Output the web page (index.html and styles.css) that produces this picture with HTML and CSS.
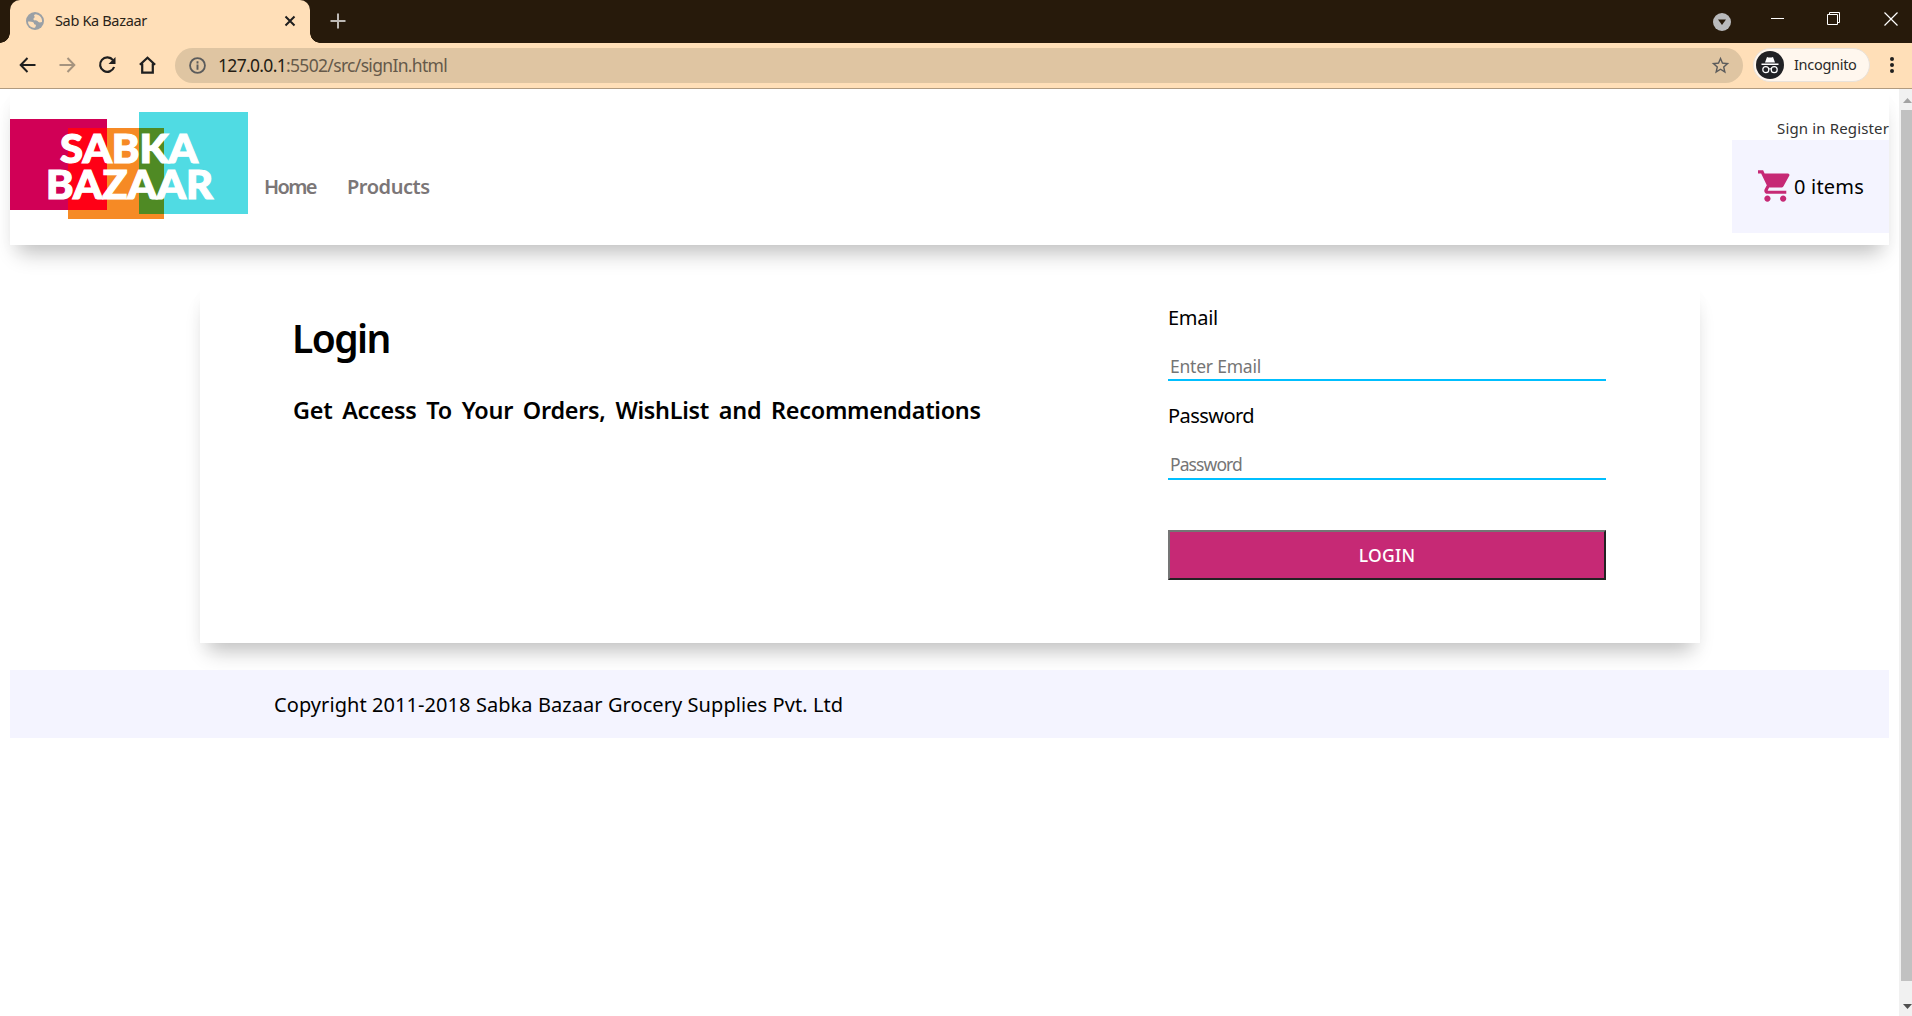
FILE: index.html
```html
<!DOCTYPE html>
<html lang="en">
<head>
<meta charset="utf-8">
<title>Sab Ka Bazaar</title>
<link rel="stylesheet" href="styles.css">
</head>
<body>
<div class="tabstrip">
  <div class="tab">
    <svg class="globe" viewBox="0 0 18 18"><circle cx="9" cy="9" r="9" fill="#9aa0a6"/><path d="M2 9.500c2 0 4.500 0 5.500 1s0 2 1.500 2 1 1.500 0 3.300C5 16 2 13 2 9.500zM10 2.200c-2 .3-2.500 1.300-1.500 2.300S7 6 7.500 7.500s3 .5 4 1.500 1.500 2 4.500 1C16.500 6 14 3 10 2.200z" fill="#ffdfb8"/></svg>
    <span class="tab-title">Sab Ka Bazaar</span>
    <svg class="tab-close" viewBox="0 0 12 12"><path d="M1.500 1.500l9 9m0-9l-9 9" stroke="#1f1f1f" stroke-width="2"/></svg>
  </div>
  <svg class="new-tab" viewBox="0 0 16 16"><path d="M8 .5v15M.5 8h15" stroke="#bdb9b5" stroke-width="2"/></svg>
  <div class="window-controls">
    <svg class="wc-search" viewBox="0 0 18 18"><circle cx="9" cy="9" r="9" fill="#b9babc"/><path d="M5 6.500h8L9 12z" fill="#271a0b"/></svg>
    <svg class="wc-min" viewBox="0 0 13 14"><path d="M0 7.500h13" stroke="#fff"/></svg>
    <svg class="wc-max" viewBox="0 0 14 14"><path d="M.5 2.500h10v10H.5zM2.500 2.500v-2h10v10h-2" fill="none" stroke="#fff"/></svg>
    <svg class="wc-close" viewBox="0 0 14 14"><path d="M.5.5l13 13m0-13l-13 13" stroke="#fff" stroke-width="1.200"/></svg>
  </div>
</div>
<div class="toolbar">
  <svg class="back" viewBox="0 0 16 16"><path d="M16 8H1.500M8 1L1.200 8 8 15" fill="none" stroke="#1f1f1f" stroke-width="2"/></svg>
  <svg class="forward" viewBox="0 0 16 16"><path d="M0 8h14.500M8 1l6.800 7L8 15" fill="none" stroke="#a5937e" stroke-width="2"/></svg>
  <svg class="reload" viewBox="0 0 18 18"><path d="M15 4.200A7.200 7.200 0 1 0 16.100 11" fill="none" stroke="#1f1f1f" stroke-width="2.200"/><path d="M17.500 1v7h-7z" fill="#1f1f1f"/></svg>
  <svg class="home" viewBox="0 0 16 17"><path d="M.8 8.300L8 1.700l7.200 6.600M3 7v8.800h10V7" fill="none" stroke="#1f1f1f" stroke-width="2.100"/></svg>
  <div class="omnibox">
    <svg class="info" viewBox="0 0 16 16"><circle cx="8" cy="8" r="7" fill="none" stroke="#5b5b5b" stroke-width="1.700"/><path d="M8 7v5M8 4v2" stroke="#5b5b5b" stroke-width="1.800"/></svg>
    <span class="url"><span class="host">127.0.0.1</span>:5502/src/signIn.html</span>
    <svg class="star" viewBox="0 0 24 24"><path d="M22 9.240l-7.190-.620L12 2 9.190 8.630 2 9.240l5.460 4.730L5.820 21 12 17.270 18.180 21l-1.630-7.030zM12 15.400l-3.760 2.270 1-4.280-3.320-2.880 4.380-.380L12 6.100l1.710 4.040 4.380.380-3.320 2.880 1 4.280z" fill="#5b5b5b"/></svg>
  </div>
  <div class="incognito">
    <svg class="spy" viewBox="0 0 28 28"><circle cx="14" cy="14" r="14" fill="#202124"/><path d="M9 11.500L11 6q3 1 6 0l2 5.500zM5.500 12.500h17v1.400h-17z" fill="#fff"/><circle cx="9.800" cy="18.700" r="3" fill="none" stroke="#fff" stroke-width="1.200"/><circle cx="18.200" cy="18.700" r="3" fill="none" stroke="#fff" stroke-width="1.200"/><path d="M12.500 18.200q1.500-1 3 0" fill="none" stroke="#fff"/></svg>
    <span class="incog-label">Incognito</span>
  </div>
  <svg class="menu" viewBox="0 0 4 16"><circle cx="2" cy="2" r="2"/><circle cx="2" cy="8" r="2"/><circle cx="2" cy="14" r="2"/></svg>
</div>
<div class="viewport">
  <div class="page">
    <header class="header">
      <svg class="logo" viewBox="0 0 238 107">
        <path d="M0 7h97v91H0z" fill="#d10056"/><path d="M58 16h96v91H58z" fill="#f68a25"/><path d="M129 0h109v102H129z" fill="#50dbe3"/>
        <path d="M58 16h39v82H58z" fill="#ff0016"/><path d="M129 16h25v86h-25z" fill="#4f8a24"/>
        <text x="50" y="51" textLength="138" lengthAdjust="spacingAndGlyphs">SABKA</text><text x="36" y="87" textLength="167" lengthAdjust="spacingAndGlyphs">BAZAAR</text>
      </svg>
      <nav class="nav"><a class="nav-home">Home</a><a class="nav-products">Products</a></nav>
      <div class="account">
        <div class="auth">Sign in Register</div>
        <div class="cart">
          <svg class="cart-icon" viewBox="1 2 21 20"><path d="M7 18c-1.100 0-1.990.9-1.990 2S5.900 22 7 22s2-.9 2-2-.9-2-2-2zM1 2v2h2l3.600 7.590-1.350 2.450c-.160.280-.250.610-.250.960 0 1.100.9 2 2 2h12v-2H7.420c-.140 0-.250-.110-.250-.250l.030-.120.900-1.630h7.450c.750 0 1.410-.410 1.750-1.030l3.580-6.490A1 1 0 0 0 20 4H5.210l-.940-2H1zm16 16c-1.100 0-1.990.9-1.990 2s.890 2 1.990 2 2-.9 2-2-.9-2-2-2z" fill="#c62975"/></svg>
          <span class="count">0 items</span>
        </div>
      </div>
    </header>
    <main class="card">
      <section class="intro">
        <h1>Login</h1>
        <h3>Get Access To Your Orders, WishList and Recommendations</h3>
      </section>
      <form class="form">
        <label class="label-email" for="email">Email</label>
        <input class="field" id="email" type="email" placeholder="Enter Email">
        <label class="label-password" for="password">Password</label>
        <input class="field field-password" id="password" type="password" placeholder="Password">
        <button type="button" class="submit">LOGIN</button>
      </form>
    </main>
    <footer class="footer">Copyright 2011-2018 Sabka Bazaar Grocery Supplies Pvt. Ltd</footer>
  </div>
  <div class="scrollbar"><svg class="arrow" viewBox="0 0 9 5"><path d="M0 5l4.500-5L9 5z" fill="#a3a3a3"/></svg><div class="thumb"></div><svg class="arrow" viewBox="0 0 9 5"><path d="M0 0h9L4.500 5z" fill="#505050"/></svg></div>
</div>
</body>
</html>
```
FILE: styles.css
```css
* { box-sizing: border-box; }
body { margin: 0; height: 1016px; overflow: hidden; display: flex; flex-direction: column; background: #fff; color: #000; font-family: "Noto Sans", sans-serif; font-size: 20px; line-height: 28px; }
svg { display: block; flex: none; }
span, a, .auth, h3 { white-space: nowrap; }
.tabstrip { height: 43px; flex: none; display: flex; background: #271a0b; padding-left: 10px; }
.tab { position: relative; width: 300px; height: 43px; display: flex; align-items: center; background: #ffdfb8; border-radius: 10px 10px 0 0; padding: 0 14px 2px 16px; }
.tab::before, .tab::after { content: ""; position: absolute; bottom: 0; width: 10px; height: 10px; }
.tab::before { left: -10px; background: radial-gradient(circle at 0 0, transparent 9.500px, #ffdfb8 10px); }
.tab::after { right: -10px; background: radial-gradient(circle at 100% 0, transparent 9.500px, #ffdfb8 10px); }
.globe { width: 18px; height: 18px; }
.tab-title { margin: -2px 0 0 11px; font-size: 14.500px; letter-spacing: -.340px; color: #2b2418; }
.tab-close { width: 12px; height: 12px; margin-left: auto; }
.new-tab { width: 16px; height: 16px; margin: 13px 0 0 20px; }
.window-controls { display: flex; margin-left: auto; padding-right: 14px; }
.wc-search { width: 18px; height: 18px; margin: 13px 40px 0 0; }
.wc-min { width: 13px; height: 14px; margin: 11px 43px 0 0; }
.wc-max { width: 14px; height: 14px; margin: 12px 43px 0 0; }
.wc-close { width: 14px; height: 14px; margin-top: 12px; }
.toolbar { height: 46px; flex: none; display: flex; align-items: center; background: #ffdfb8; border-bottom: 1px solid #b19b80; padding: 0 18px 1px 19px; }
.back, .forward { width: 17px; height: 16px; }
.forward { margin-left: 23px; }
.reload { width: 18px; height: 18px; margin-left: 22px; }
.home { width: 17px; height: 18px; margin-left: 23px; }
.omnibox { flex: 1; height: 35px; margin-left: 19px; display: flex; align-items: center; border-radius: 18px; background: #dfc5a2; padding: 0 12px 0 14px; }
.info { width: 17px; height: 17px; }
.url { margin-left: 12px; font-size: 17.500px; letter-spacing: -.680px; color: #65594a; }
.host { color: #241d14; }
.star { width: 21px; height: 21px; margin-left: auto; }
.incognito { width: 117px; height: 34px; margin: 0 20px 0 10px; display: flex; align-items: center; background: #fff7ee; border: 1px solid #e9e2da; border-radius: 17px; padding-left: 2px; }
.spy { width: 28px; height: 28px; }
.incog-label { margin: -2px 0 0 10px; font-size: 14.500px; letter-spacing: -.300px; color: #2b2a29; }
.menu { width: 4px; height: 16px; fill: #1f1f1f; }
.viewport { flex: 1; display: flex; min-height: 0; }
.page { flex: 1; padding: 0 10px; }
.header { height: 156px; display: flex; background: #fff; }
.header, .card { box-shadow: 0 16px 20px -8px rgba(0,0,0,.240), 0 8px 16px rgba(0,0,0,.020); }
.logo { width: 238px; height: 107px; margin-top: 23px; fill: #fff; stroke: #fff; stroke-width: 1.200px; font: 900 39px Lato, sans-serif; }
.logo path { stroke: none; }
.nav { display: flex; margin: 84px 0 0 16px; color: #7b7677; font-weight: 600; }
.nav-home { width: 83px; letter-spacing: -1.600px; }
.nav-products { letter-spacing: -.450px; }
.account { width: 157px; margin: 27px 0 0 auto; }
.auth { font-size: 15px; line-height: 24px; letter-spacing: .140px; color: #333; text-align: right; }
.cart { height: 93px; display: flex; align-items: center; background: #f4f4ff; padding-left: 26px; }
.cart-icon { width: 33px; height: 32px; margin-top: -1px; }
.count { margin-left: 3px; letter-spacing: .200px; }
.card { width: 1500px; height: 358px; margin: 40px 0 0 190px; display: flex; justify-content: space-between; background: #fff; padding: 0 94px 0 93px; }
.intro { padding-top: 26px; }
h1, h3 { margin: 0; font-weight: 600; }
h1 { margin-left: -1px; font-size: 39px; line-height: 54px; letter-spacing: -1.600px; }
h3 { margin-top: 29px; font-size: 23.400px; line-height: 32px; letter-spacing: -.270px; word-spacing: 4px; }
.form { width: 438px; padding-top: 19px; display: flex; flex-direction: column; }
.label-email { letter-spacing: -.280px; }
.label-password { letter-spacing: -.560px; }
.field { height: 29px; margin: 20px 0 21px; border: 0; border-bottom: 2px solid #00bfff; padding: 0 0 0 2px; background: none; font: 17.500px "Noto Sans", sans-serif; letter-spacing: -.220px; }
.field::placeholder { color: #757575; }
.field-password { height: 30px; margin-bottom: 50px; letter-spacing: -.900px; }
.submit { height: 50px; border: 2px solid; border-color: #757575 #222 #222 #757575; background: #c62975; color: #fff; font: 500 17.500px "Noto Sans", sans-serif; letter-spacing: .300px; }
.footer { height: 68px; margin-top: 27px; display: flex; align-items: center; background: #f4f4ff; padding: 2px 0 0 264px; letter-spacing: .070px; }
.scrollbar { width: 13px; background: #f1f1f1; padding: 9px 0 7px 2px; display: flex; flex-direction: column; align-items: center; }
.arrow { width: 9px; height: 5px; margin-left: 2px; }
.thumb { width: 11px; height: 871px; margin: 7px 0 auto; background: #c1c1c1; }
```
